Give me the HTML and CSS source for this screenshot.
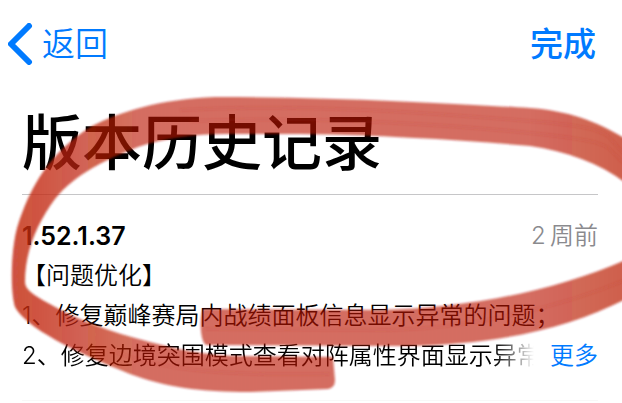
FILE: index.html
```html
<!DOCTYPE html>
<html lang="zh-CN">
<head>
  <meta charset="UTF-8">
  <meta name="viewport" content="width=device-width, initial-scale=1.0">
  <title>版本历史记录</title>
  <link rel="stylesheet" href="styles.css">
</head>
<body>
  <header class="navbar">
    <a class="back" href="#">
      <svg class="back-icon" viewBox="0 0 26 42" aria-hidden="true">
        <path d="M21 3 L3 21 L21 39"/>
      </svg>
      <span>返回</span>
    </a>
    <button class="done" type="button">完成</button>
  </header>

  <main class="history">
    <h1>版本历史记录</h1>

    <article class="release">
      <div class="release-head">
        <h2>1.52.1.37</h2>
        <time>2&thinsp;周前</time>
      </div>
      <p>【问题优化】</p>
      <p>1、修复巅峰赛局内战绩面板信息显示异常的问题；</p>
      <div class="last-line">
        <p class="clipped">2、修复边境突围模式查看对阵属性界面显示异常</p>
        <button class="more" type="button">更多</button>
      </div>
    </article>
  </main>

  <!-- marker stroke over the page -->
  <svg class="marker" viewBox="0 0 622 403" aria-hidden="true">
    <defs>
      <linearGradient id="ink" x1="0" y1="0" x2="622" y2="0" gradientUnits="userSpaceOnUse">
        <stop offset="0" stop-color="#c42c16" stop-opacity="0.84"/>
        <stop offset="0.07" stop-color="#c22812" stop-opacity="0.78"/>
        <stop offset="0.22" stop-color="#ba1800" stop-opacity="0.62"/>
        <stop offset="0.85" stop-color="#ba1800" stop-opacity="0.62"/>
        <stop offset="1" stop-color="#ba1800" stop-opacity="0.7"/>
      </linearGradient>
      <filter id="soft" x="-5%" y="-5%" width="110%" height="110%">
        <feGaussianBlur stdDeviation="0.9"/>
      </filter>
    </defs>
    <g fill="url(#ink)" filter="url(#soft)">
      <path d="M203 309 L380 310 C470 308 560 290 632 257 L632 296 C570 328 500 346 390 346 L206 345 C199 340 200 315 203 309 Z"/>
      <path d="M632 143 C600 122 570 111 530 108 C460 104 340 97 215 97 C160 99 120 112 92 126 C50 152 30 186 17 228 C11 250 10 290 15 307 C26 328 75 352 130 374 C165 387 200 392 250 392 L328 389 Q335 388 335 380 L333 357 L240 356 C205 355 180 350 150 342 C110 332 75 319 48 303 C34 295 25 290 25 282 C25 250 38 222 55 199 C75 174 105 160 138 147 C165 138 195 134 225 134 L300 134 C380 135 460 140 530 146 C570 152 605 165 632 188 Z"/>
    </g>
    <g class="streaks" filter="url(#soft)">
      <path d="M180 110 C300 103 430 113 530 121 S600 138 630 158"/>
      <path d="M190 121 C320 116 430 123 530 133 S600 148 630 168"/>
      <path d="M205 329 L390 330 C470 328 560 308 630 278"/>
      <path d="M110 350 C160 370 220 376 330 374"/>
    </g>
  </svg>
</body>
</html>
```
FILE: styles.css
```css
* {
  box-sizing: border-box;
}
body {
  margin: 0;
  position: relative;
  background-color: #fff;
  color: #000;
  font-family: Inter, "Noto Sans CJK SC", sans-serif;
  font-size: 24px;
  line-height: 40px;
  overflow: hidden;
}
h1, h2, p {
  margin: 0;
}
button {
  padding: 0;
  border: none;
  background: none;
  font: inherit;
  color: #007aff;
  cursor: pointer;
}
.navbar {
  display: flex;
  justify-content: space-between;
  align-items: center;
  padding: 20px 26px 0 8px;
  font-size: 33px;
  line-height: 48px;
}
.back {
  display: flex;
  align-items: center;
  gap: 8px;
  color: #007aff;
  font-weight: 350;
  text-decoration: none;
}
.back-icon {
  width: 26px;
  height: 42px;
  fill: none;
  stroke: currentColor;
  stroke-width: 6;
  stroke-linecap: round;
  stroke-linejoin: round;
}
.navbar .done {
  font-weight: 500;
}
.history {
  padding: 33px 24px 0 22px;
}
h1 {
  padding-bottom: 9px;
  border-bottom: 1px solid #c6c6c8;
  font-size: 60px;
  font-weight: 500;
  line-height: 84px;
}
.release {
  padding: 21px 0 24px;
  border-bottom: 1px solid #f8f8f8;
}
.release-head {
  display: flex;
  justify-content: space-between;
}
h2 {
  font-size: 25px;
  font-weight: 600;
}
time {
  color: #8a8a8e;
  font-weight: 350;
}
.release p {
  font-weight: 350;
  white-space: nowrap;
}
.last-line {
  display: flex;
  gap: 12px;
}
.clipped {
  flex: 1;
  min-width: 0;
  overflow: hidden;
  -webkit-mask-image: linear-gradient(to left, transparent 4px, #000 44px);
  mask-image: linear-gradient(to left, transparent 4px, #000 44px);
}
.more {
  flex: none;
  font-weight: 350;
}
.marker {
  position: absolute;
  top: 0;
  left: 0;
  width: 100%;
  pointer-events: none;
}
.streaks {
  fill: none;
  stroke: #c23a28;
  stroke-width: 3;
  stroke-opacity: 0.12;
}
```
